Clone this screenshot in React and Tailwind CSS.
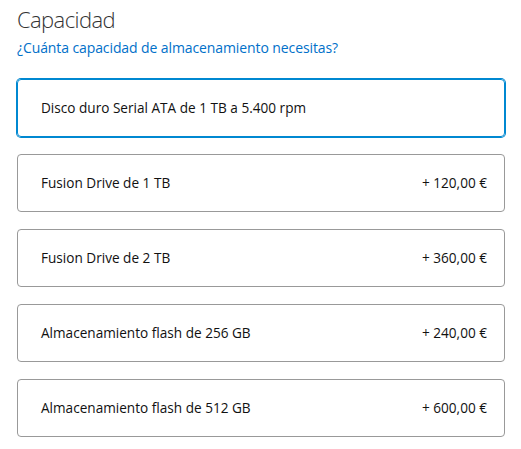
export default function App() {
  const items = [
    { label: "Disco duro Serial ATA de 1 TB a 5.400 rpm", price: "", selected: true },
    { label: "Fusion Drive de 1 TB", price: "+ 120,00 €" },
    { label: "Fusion Drive de 2 TB", price: "+ 360,00 €" },
    { label: "Almacenamiento flash de 256 GB", price: "+ 240,00 €" },
    { label: "Almacenamiento flash de 512 GB", price: "+ 600,00 €" },
  ];
  return (
    <div className="w-[521px] h-[449px] bg-white pl-[17px] pr-[16px] pt-[3px]" style={{ fontFamily: "'Open Sans', Lato, sans-serif" }}>
      <h1 className="text-[22px] font-light text-[#333333] leading-[32px] tracking-[-0.6px]">Capacidad</h1>
      <p className="text-[14px] text-[#0070c9] leading-[20px] mt-[3px] tracking-[-0.1px]">¿Cuánta capacidad de almacenamiento necesitas?</p>
      <div className="flex flex-col gap-[17px] mt-[21px]">
        {items.map((it) =>
          it.selected ? (
            <div key={it.label} className="h-[58px] rounded-[4px] border border-[#0088d1] shadow-[0_0_0_1px_#0088d1] flex items-center justify-between pl-[23px] pr-[17px] text-[13.6px] text-[#111111]">
              <span>{it.label}</span>
              <span>{it.price}</span>
            </div>
          ) : (
            <div key={it.label} className="h-[58px] rounded-[4px] border border-[#999999] flex items-center justify-between pl-[23px] pr-[17px] text-[13.6px] text-[#111111]">
              <span>{it.label}</span>
              <span>{it.price}</span>
            </div>
          )
        )}
      </div>
    </div>
  );
}
